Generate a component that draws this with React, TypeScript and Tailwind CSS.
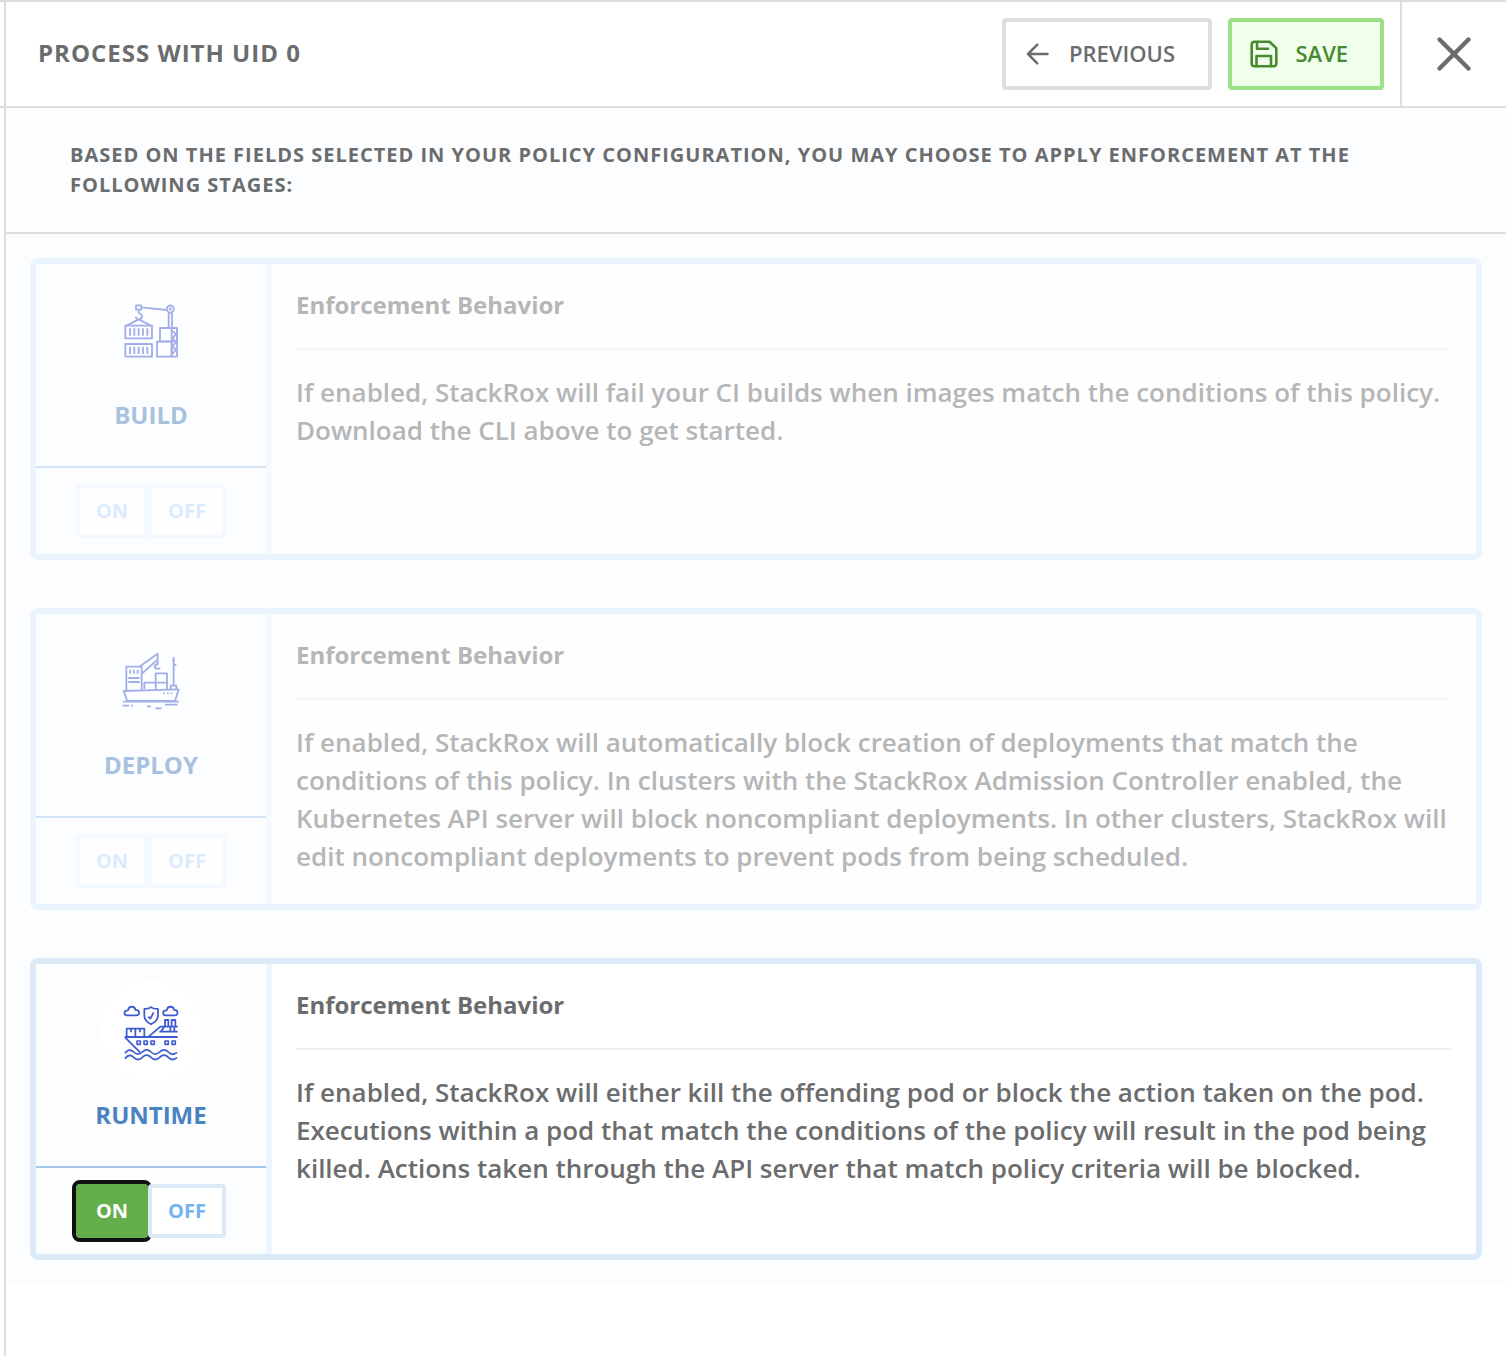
import React from "react";

type IconProps = { className?: string };

function BuildIcon({ className }: IconProps) {
  return (
    <svg viewBox="0 -15 306 306" className={className} fill="none" stroke="currentColor" strokeWidth="5.5" strokeLinejoin="round">
      <rect x="108" y="61" width="16" height="13" />
      <path d="M124 67 L201 75" />
      <circle cx="211" cy="72" r="10.5" />
      <circle cx="211" cy="72" r="3" strokeWidth="3.5" />
      <path d="M206 82 V129 M216 82 V129" />
      <path d="M116 74 V83 C121 86 126 89 126 94 C126 100 121 103 116 103 C111 103 108 100 107 95" />
      <path d="M116 103 L80 122 M116 103 L153 122" />
      <rect x="76" y="122" width="80" height="38" />
      <rect x="76" y="177" width="80" height="38" />
      <path d="M90 130 V152 M103 130 V152 M116 130 V152 M129 130 V152 M142 130 V152" />
      <path d="M90 185 V207 M103 185 V207 M116 185 V207 M129 185 V207 M142 185 V207" />
      <rect x="180" y="129" width="51" height="40" />
      <rect x="171" y="170" width="44" height="45" />
      <path d="M215 129 V215 H231 V129" />
      <path d="M216 136 L228 148 L217 160 L228 172 L217 184 L228 195 L217 207" />
    </svg>
  );
}

function DeployIcon({ className }: IconProps) {
  return (
    <svg viewBox="0 -15 306 306" className={className} fill="none" stroke="currentColor" strokeWidth="5.5" strokeLinejoin="round">
      <path d="M79 166 V95 H125 V165" />
      <path d="M91 104 V116 M102 104 V116 M113 104 V116" />
      <path d="M85 129 H119 M85 141 H119" />
      <path d="M118 95 L173 56 V73 L126 116 M173 73 V87 C168 88 164 91 164 95 C164 99 168 101 174 101 H181" />
      <path d="M133 163 V143 H201 M167 163 V115 H201 V163" />
      <path d="M221 67 V152 M216 77 H221 M221 90 H229 M212 162 V152 H229 V162" />
      <path d="M71 168 L236 163 L225 198 H82 Z" />
      <path d="M69 200 H237" />
      <path d="M190 175 H195 M201 175 H206 M212 175 H217" />
      <path d="M68 212 H87 M93 212 H99 M141 214 H153 M166 220 H185 M195 209 H233" />
    </svg>
  );
}

function RuntimeIcon({ className }: IconProps) {
  return (
    <svg viewBox="30 15 306 306" className={className} fill="none" stroke="currentColor" strokeWidth="5.3" strokeLinejoin="round">
      <path d="M111 121 C101 121 101 107 111 107 C113 105 114 105 115 105 C116 92 135 92 136 105 C150 104 151 121 139 121 Z" />
      <path d="M227 121 C217 121 217 107 227 107 C229 105 230 105 231 105 C232 92 251 92 252 105 C265 104 266 121 255 121 Z" />
      <path d="M183 96 C178 101 171 102 163 102 V121 C163 134 171 142 183 148 C195 142 204 134 204 121 V102 C196 102 188 101 183 96 Z" />
      <path d="M175 125 L181 131 L191 112" />
      <path d="M110 185 V161 H163 V185 M136 161 V185 M123 161 V172 M150 161 V172" />
      <path d="M104 186 H263" />
      <path d="M106 188 L151 233" />
      <path d="M176 185 L211 155 H263 M211 171 L222 157 M208 170 H263 M241 156 V170 M253 156 V170" />
      <path d="M225 154 V135 H235 V154 M245 154 V135 H256 V154" />
      <path d="M141 198 H151 V208 H141 Z M162 198 H172 V208 H162 Z M183 198 H193 V208 H183 Z M225 198 H235 V208 H225 Z M246 198 H256 V208 H246 Z" strokeWidth="4.8" />
      <path d="M105 235 C113 223 123 223 131 231 C139 239 149 239 157 231 C165 223 175 223 183 231 C191 239 201 239 209 231 C217 223 227 223 235 231 C243 239 253 239 261 232" />
      <path d="M105 251 C113 239 123 239 131 247 C139 255 149 255 157 247 C165 239 175 239 183 247 C191 255 201 255 209 247 C217 239 227 239 235 247 C243 255 253 255 261 248" />
    </svg>
  );
}

type Stage = {
  name: string;
  icon: React.ComponentType<IconProps>;
  lines: string[];
  active?: boolean;
};

const stages: Stage[] = [
  {
    name: "BUILD",
    icon: BuildIcon,
    lines: [
      "If enabled, StackRox will fail your CI builds when images match the conditions of this policy.",
      "Download the CLI above to get started.",
    ],
  },
  {
    name: "DEPLOY",
    icon: DeployIcon,
    lines: [
      "If enabled, StackRox will automatically block creation of deployments that match the",
      "conditions of this policy. In clusters with the StackRox Admission Controller enabled, the",
      "Kubernetes API server will block noncompliant deployments. In other clusters, StackRox will",
      "edit noncompliant deployments to prevent pods from being scheduled.",
    ],
  },
  {
    name: "RUNTIME",
    icon: RuntimeIcon,
    active: true,
    lines: [
      "If enabled, StackRox will either kill the offending pod or block the action taken on the pod.",
      "Executions within a pod that match the conditions of the policy will result in the pod being",
      "killed. Actions taken through the API server that match policy criteria will be blocked.",
    ],
  },
];

function Toggle({ active }: { active?: boolean }) {
  const base = "h-[54px] rounded-[4px] border-4 text-[20px] font-bold leading-none";
  const off = active ? "border-[#dceaf8] bg-white text-[#74b0f4]" : "border-[#f3f9fe] bg-[#fefeff] text-[#dbebfd]";
  const on = active
    ? "border-[#64ae4a] bg-[#64ae4a] text-white outline-4 outline-[#0f1010]"
    : off;
  return (
    <div className="flex h-[86px] items-center pl-10">
      <button className={`${base} ${on} w-[72px]`}>ON</button>
      <button className={`${base} ${off} relative w-[78px]`}>OFF</button>
    </div>
  );
}

function StageCard({ name, icon: Icon, lines, active }: Stage) {
  return (
    <section
      className={`flex h-[302px] overflow-hidden rounded-[8px] border-[6px] ${
        active ? "border-[#dceaf8] bg-white" : "border-[#ebf4fc] bg-[#fefeff]"
      }`}
    >
      <div className={`w-[236px] shrink-0 border-r-[6px] bg-[#fcfdff] ${active ? "border-[#ecf5ff]" : "border-[#f5faff]"}`}>
        <div
          className={`flex h-[204px] flex-col items-center border-b-2 pt-4 ${
            active ? "border-[#a3c8e8] text-[#4a83c0]" : "border-[#d1e3f6] text-[#a7c1df]"
          }`}
        >
          <div className={`size-[102px] rounded-full ${active ? "bg-white text-[#3f5bd0]" : "bg-[#fdfeff] text-[#a3aee9]"}`}>
            <Icon className="size-[102px]" />
          </div>
          <div className="mt-4 text-[24px] font-bold leading-[34px]">{name}</div>
        </div>
        <Toggle active={active} />
      </div>
      <div className={`flex-1 px-6 ${active ? "text-[#6b6c6d]" : "text-[#b5b6b7]"}`}>
        <h3
          className={`h-[86px] border-b-2 pt-6 text-[24px] font-bold leading-[34px] ${
            active ? "border-[#eeeff0]" : "border-[#f6f7f8]"
          }`}
        >
          Enforcement Behavior
        </h3>
        <p className="pt-[23px] text-[26px] font-semibold leading-[38px] tracking-[-0.006px] whitespace-nowrap">
          {lines.map((line) => (
            <span key={line} className="block">
              {line}
            </span>
          ))}
        </p>
      </div>
    </section>
  );
}

export default function App() {
  return (
    <div className="flex h-[1356px] w-[1506px] overflow-hidden bg-white font-['Open_Sans',sans-serif] text-[#6b6c6d]">
      <div className="h-[108px] w-1 shrink-0 border-y-2 border-[#dedede]" />
      <main className="flex-1 border-l-2 border-[#dedede]">
        <header className="flex h-[108px] items-center border-y-2 border-[#dedede] pl-8">
          <h1 className="flex-1 pb-0.5 text-[24px] font-bold leading-[34px] tracking-[1px]">PROCESS WITH UID 0</h1>
          <button className="flex h-[72px] w-[210px] items-center rounded-[4px] border-4 border-[#dedede] bg-white pl-[18px] text-[22px] font-semibold">
            <svg viewBox="0 0 28 28" className="mr-[17px] size-7" fill="none" stroke="currentColor" strokeWidth="2.5" strokeLinecap="round" strokeLinejoin="round">
              <path d="M23.5 14 H4 M13.3 4.6 L4 14 L13.3 23.4" />
            </svg>
            <span className="pb-0.5">PREVIOUS</span>
          </button>
          <button className="ml-4 flex h-[72px] w-[156px] items-center rounded-[4px] border-4 border-[#9de187] bg-[#f0ffec] pl-[18px] text-[22px] font-semibold text-[#478a30]">
            <svg viewBox="0 0 28 28" className="mr-[17.5px] size-7" fill="none" stroke="currentColor" strokeWidth="2.6" strokeLinecap="round" strokeLinejoin="round">
              <path d="M19.5 1.7 H4.5 A3 3 0 0 0 1.7 4.5 V23.5 A3 3 0 0 0 4.5 26.3 H23.5 A3 3 0 0 0 26.3 23.5 V8.2 Z" />
              <path d="M7 2 V8.7 H18 M6.5 26 V16 H21 V26" />
            </svg>
            <span className="pb-0.5">SAVE</span>
          </button>
          <button className="ml-4 flex h-[104px] w-[106px] items-center justify-center border-l-2 border-[#dedede]" aria-label="Close">
            <svg viewBox="0 0 36 36" className="size-9" stroke="currentColor" strokeWidth="4.4" strokeLinecap="round">
              <path d="M3.5 3.5 L32.5 32.5 M32.5 3.5 L3.5 32.5" />
            </svg>
          </button>
        </header>
        <div className="h-[1176px] bg-[#fcfdff]">
          <div className="h-[126px] border-b-2 border-[#dedede] px-16 pt-8 text-[20px] font-bold leading-[30px] tracking-[1px]">
            <span className="block whitespace-nowrap">
              BASED ON THE FIELDS SELECTED IN YOUR POLICY CONFIGURATION, YOU MAY CHOOSE TO APPLY ENFORCEMENT AT THE
            </span>
            <span className="block">FOLLOWING STAGES:</span>
          </div>
          <div className="flex flex-col gap-12 p-6">
            {stages.map((stage) => (
              <StageCard key={stage.name} {...stage} />
            ))}
          </div>
        </div>
      </main>
    </div>
  );
}
